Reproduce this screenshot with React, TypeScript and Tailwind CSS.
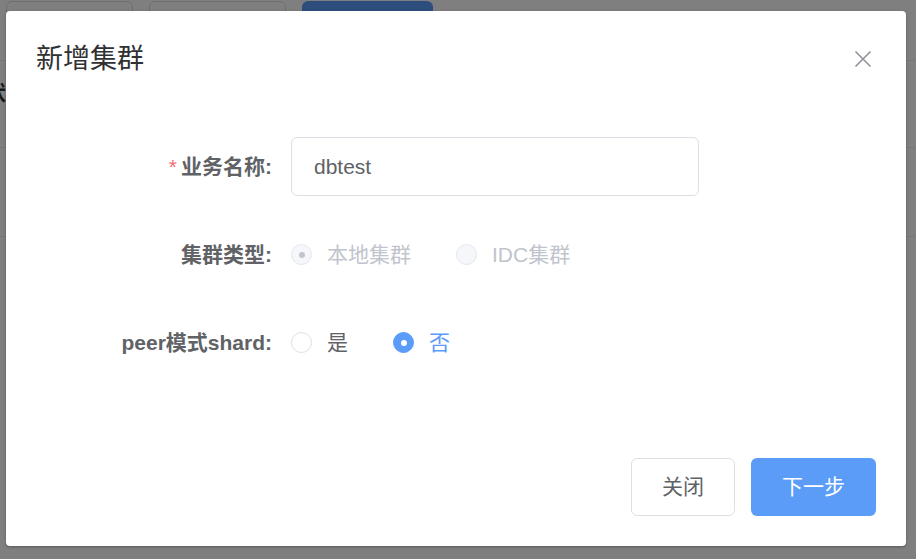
import React from 'react';

const font = { fontFamily: '"Liberation Sans", "Noto Sans CJK SC", sans-serif' };

// 单选框：checked / disabled 组合
function Radio({ label, checked = false, disabled = false }: { label: string; checked?: boolean; disabled?: boolean }) {
  const circle = disabled
    ? 'bg-[#f5f7fa] border-[#e4e7ed]'
    : checked
      ? 'bg-[#5a9cf8] border-[#5a9cf8]'
      : 'bg-white border-[#dcdfe6]';
  const dot = disabled ? 'bg-[#c0c4cc]' : 'bg-white';
  const text = disabled ? 'text-[#c0c4cc]' : checked ? 'text-[#5a9cf8]' : 'text-[#606266]';

  return (
    <label className="flex items-center mr-[45px]">
      <span className={`w-[21px] h-[21px] rounded-full border flex items-center justify-center ${circle}`}>
        {checked && <span className={`w-[6px] h-[6px] rounded-full ${dot}`} />}
      </span>
      <span className={`pl-[15px] text-[21px] leading-none ${text}`}>{label}</span>
    </label>
  );
}

function FormRow({ label, required = false, children }: { label: string; required?: boolean; children: React.ReactNode }) {
  return (
    <div className="flex items-center h-[59px]">
      <div className="w-[236px] text-right text-[21px] font-bold text-[#606266]">
        {required && <span className="text-[#f56c6c] font-normal mr-[4px]">*</span>}
        {label}
      </div>
      <div className="ml-[19px] flex items-center h-full">{children}</div>
    </div>
  );
}

export default function App() {
  return (
    <div className="relative w-[916px] h-[559px] overflow-hidden bg-white" style={font}>
      {/* 背景页面 */}
      <div className="flex gap-[16px] pl-[6px] pt-[1px]">
        <div className="w-[127px] h-[44px] rounded-[6px] border border-[#dcdfe6] bg-white" />
        <div className="w-[137px] h-[44px] rounded-[6px] border border-[#dcdfe6] bg-white" />
        <div className="w-[131px] h-[44px] rounded-[6px] bg-[#5a9cf8]" />
      </div>
      <div className="mt-[15px] border-b border-[#ebeef5]" />
      <div className="h-[87px] pt-[20px] border-b border-[#ebeef5]">
        <span className="block -ml-[15px] text-[21px] leading-[24px] font-bold text-[#303133]">状态</span>
      </div>
      <div className="h-[89px] border-b border-[#ebeef5]" />

      {/* 遮罩 */}
      <div className="absolute inset-0 bg-black/50" />

      {/* 弹窗 */}
      <div className="absolute left-[6px] top-[11px] w-[900px] h-[535px] bg-white rounded-[4px] flex flex-col shadow-[0_1px_3px_rgba(0,0,0,0.3)]">
        <div className="pt-[31px] px-[30px]">
          <h2 className="text-[27px] leading-[35px] text-[#303133]">新增集群</h2>
        </div>
        <button className="absolute right-[34px] top-[39px] text-[#909399]">
          <svg width="18" height="18" viewBox="0 0 18 18" fill="none" stroke="currentColor" strokeWidth="1.6">
            <path d="M1.5 1.5 L16.5 16.5 M16.5 1.5 L1.5 16.5" />
          </svg>
        </button>

        <div className="pt-[60px] px-[30px] flex flex-col gap-[29px]">
          <FormRow label="业务名称:" required>
            <div className="w-[408px] h-[59px] rounded-[6px] border border-[#dcdfe6] flex items-center pl-[22px] text-[21px] text-[#606266]">
              dbtest
            </div>
          </FormRow>
          <FormRow label="集群类型:">
            <Radio label="本地集群" checked disabled />
            <Radio label="IDC集群" disabled />
          </FormRow>
          <FormRow label="peer模式shard:">
            <Radio label="是" />
            <Radio label="否" checked />
          </FormRow>
        </div>

        <div className="mt-auto flex justify-end gap-[16px] pr-[30px] pb-[30px]">
          <button className="w-[104px] h-[58px] rounded-[6px] border border-[#dcdfe6] bg-white text-[21px] text-[#606266]">
            关闭
          </button>
          <button className="w-[125px] h-[58px] rounded-[6px] bg-[#5a9cf8] text-[21px] text-white">下一步</button>
        </div>
      </div>
    </div>
  );
}
